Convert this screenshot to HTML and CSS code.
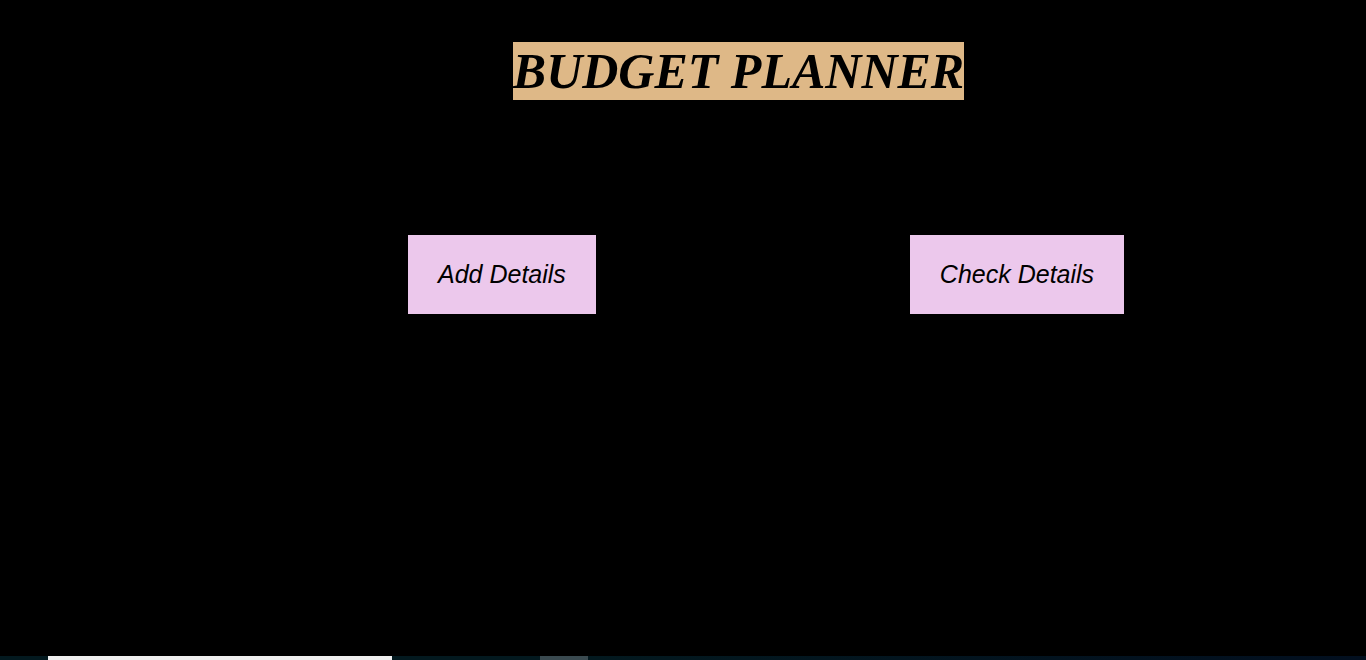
FILE: index.html
```html
<!DOCTYPE html>
<html>
<head>
<meta charset="utf-8">
<title>Budget Planner</title>
<link rel="stylesheet" href="styles.css">
</head>
<body>
<div class="page">
  <header class="header">
    <h1 class="title"><span class="title-text">BUDGET PLANNER</span></h1>
  </header>
  <main class="actions">
    <button class="btn">Add Details</button>
    <button class="btn">Check Details</button>
  </main>
  <footer class="strip">
    <div class="seg seg-a"></div>
    <div class="seg seg-b"></div>
    <div class="seg seg-c"></div>
    <div class="seg seg-d"></div>
    <div class="seg seg-e"></div>
  </footer>
</div>
</body>
</html>
```
FILE: styles.css
```css
html, body {
  margin: 0;
  padding: 0;
  background: #000;
}
.page {
  min-height: 100vh;
  display: flex;
  flex-direction: column;
}
.header {
  padding: 42px 0 0 111px;
  text-align: center;
}
.title {
  margin: 0;
  font-family: "Liberation Serif", "Times New Roman", serif;
  font-size: 50px;
  font-weight: bold;
  font-style: italic;
  line-height: 58px;
  color: #000;
}
.title-text {
  background: #deb887;
  display: inline-block;
}
.actions {
  flex: 1;
  display: flex;
  align-items: flex-start;
  gap: 314px;
  padding: 135px 0 0 408px;
}
.btn {
  background: #ecc8ec;
  border: none;
  margin: 0;
  padding: 0 30px;
  height: 79px;
  font-family: "Liberation Sans", Arial, sans-serif;
  font-style: italic;
  font-size: 25px;
  color: #000;
}
.strip {
  height: 4px;
  display: flex;
}
.seg { height: 4px; }
.seg-a { width: 48px; background: #03191f; }
.seg-b { width: 344px; background: #f0f0f0; }
.seg-c { width: 148px; background: #03191f; }
.seg-d { width: 48px; background: #3a4a50; }
.seg-e { flex: 1; background: linear-gradient(to right, #03191f, #020f1f); }
```
